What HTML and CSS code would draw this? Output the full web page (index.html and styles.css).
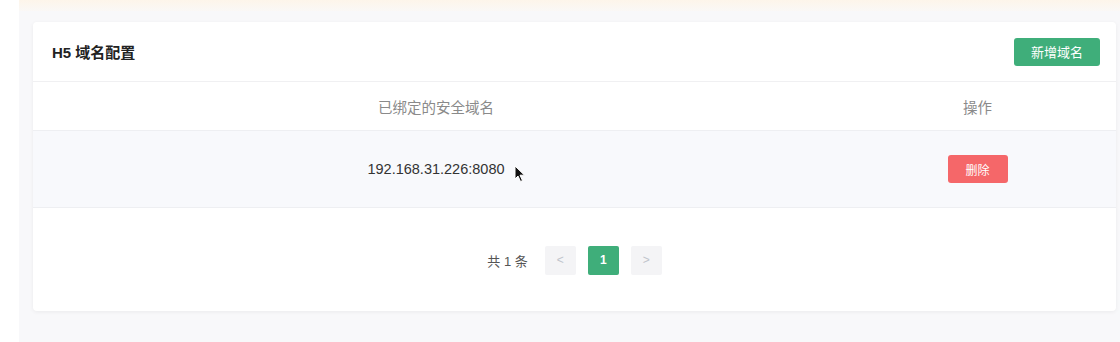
FILE: index.html
```html
<!DOCTYPE html>
<html>
    <head>
        <meta charset="utf-8">
        <title>H5 域名配置</title>
        <link rel="stylesheet" href="styles.css">
    </head>
    <body>
        <div class="main">
            <div class="topbar"></div>
            <div class="card">
                <div class="card-head">
                    <h2>H5 域名配置</h2>
                    <button class="btn btn-green">新增域名</button>
                </div>
                <div class="row row-head">
                    <div class="col-domain">已绑定的安全域名</div>
                    <div class="col-op">操作</div>
                </div>
                <div class="row row-body">
                    <div class="col-domain">
                        <span class="domain">192.168.31.226:8080<svg class="cursor" width="12" height="18" viewBox="0 0 12 18">
                                <path d="M1 1 L1 14 L4 11 L6.5 16.5 L8.5 15.6 L6 10.2 L10.5 10.2 Z" fill="#111" stroke="#fff" stroke-width="1"/>
                            </svg></span>
                    </div>
                    <div class="col-op">
                        <button class="btn btn-red">删除</button>
                    </div>
                </div>
                <div class="pager">
                    <span class="total">共 1 条</span>
                    <span class="page page-arrow">&lt;</span>
                    <span class="page page-on">1</span>
                    <span class="page page-arrow">&gt;</span>
                </div>
            </div>
        </div>
    </body>
</html>
```

FILE: styles.css
```css
body {
    margin: 0;
    background: #fff;
    font-family: "Liberation Sans", "Noto Sans CJK SC", sans-serif;
}
.main {
    margin-left: 19px;
    height: 342px;
    background: #f8f8fa;
    padding: 0 4px 0 14px;
}
.topbar {
    height: 11px;
    margin: 0 -4px 0 -14px;
    background: linear-gradient(to bottom, #fdf5ea, #faf8f6);
}
.card {
    margin-top: 11px;
    height: 289px;
    background: #fff;
    border-radius: 4px;
    box-shadow: 0 1px 4px rgba(0, 0, 0, 0.06);
}
.card-head {
    height: 59px;
    display: flex;
    align-items: center;
    justify-content: space-between;
    padding: 0 16px 0 19px;
    border-bottom: 1px solid #f0f0f2;
}
.card-head h2 {
    margin: 0;
    font-size: 15px;
    font-weight: bold;
    color: #222;
}
.btn {
    border: none;
    color: #fff;
    font-family: inherit;
    border-radius: 3px;
    padding: 0;
}
.btn-green {
    width: 86px;
    height: 28px;
    background: #3fae7a;
    font-size: 13px;
}
.btn-red {
    width: 60px;
    height: 28px;
    background: #f56769;
    font-size: 12px;
}
.row {
    display: flex;
    align-items: center;
    border-bottom: 1px solid #eeeff2;
}
.row-head {
    height: 48px;
    font-size: 14.5px;
    color: #8a8a8a;
}
.row-body {
    height: 76px;
    background: #f8f9fc;
    font-size: 14.5px;
    color: #333;
}
.col-domain {
    width: 806px;
    text-align: center;
}
.col-op {
    flex: 1;
    text-align: center;
}
.domain {
    position: relative;
}
.cursor {
    position: absolute;
    left: 147px;
    top: 4px;
}
.pager {
    height: 102px;
    display: flex;
    align-items: center;
    justify-content: center;
    padding-top: 2px;
    box-sizing: border-box;
    font-size: 13px;
}
.total {
    color: #555;
    margin-right: 17px;
}
.page {
    width: 31px;
    height: 29px;
    display: flex;
    align-items: center;
    justify-content: center;
    border-radius: 2px;
    margin-right: 12px;
}
.page:last-child {
    margin-right: 0;
}
.page-arrow {
    background: #f4f4f6;
    color: #c0c4cc;
    font-size: 12px;
}
.page-on {
    background: #3fae7a;
    color: #fff;
    font-weight: bold;
    font-size: 12px;
}
```
